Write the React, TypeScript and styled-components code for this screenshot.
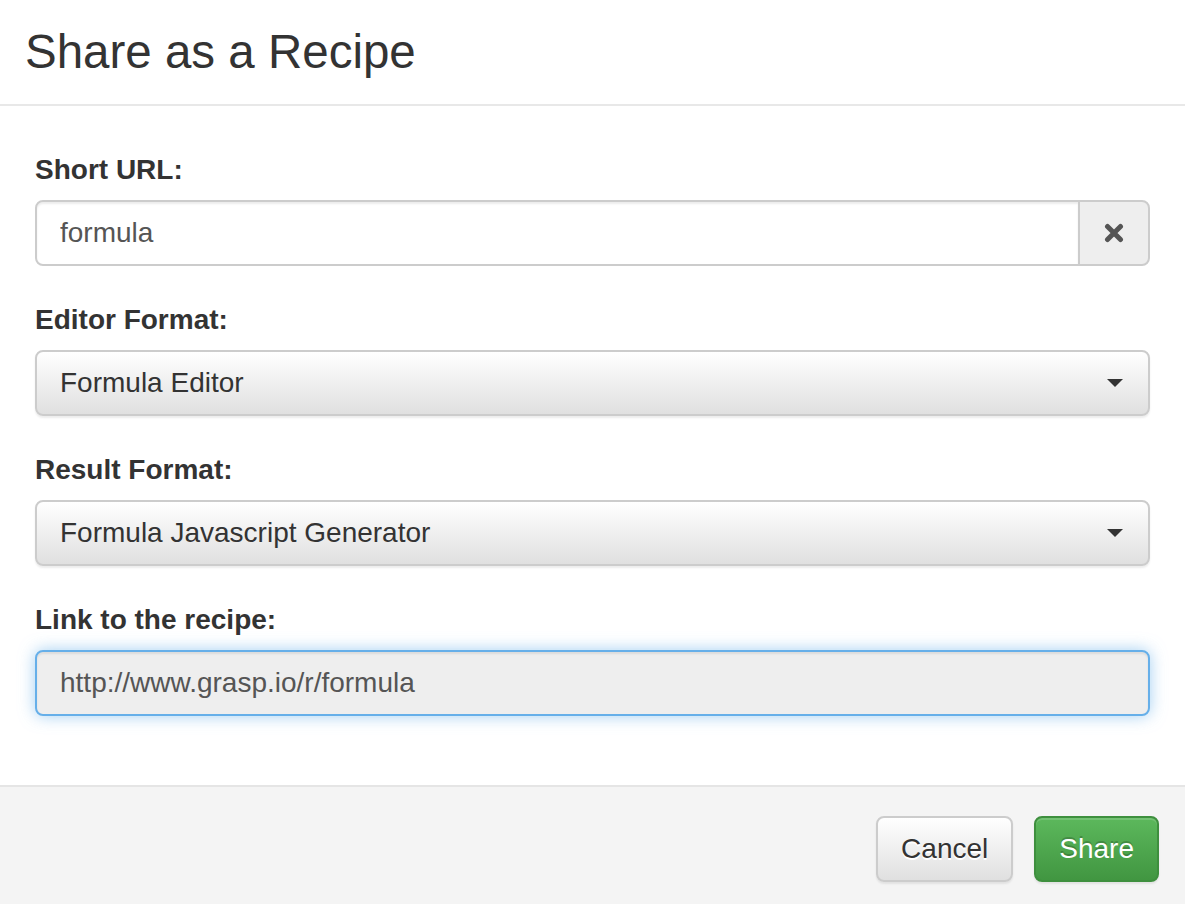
import React from 'react';
import styled, { createGlobalStyle } from 'styled-components';

const GlobalStyle = createGlobalStyle`
  html, body {
    margin: 0;
    padding: 0;
    background: #ffffff;
  }
  body {
    font-family: "Liberation Sans", Arial, Helvetica, sans-serif;
    color: #333333;
  }
  * {
    box-sizing: border-box;
  }
`;

// 모달 전체 (2x 레티나 비율 그대로)
const Modal = styled.div`
  width: 1185px;
  height: 904px;
  overflow: hidden;
  display: flex;
  flex-direction: column;
  background: #ffffff;
`;

const Header = styled.div`
  flex-shrink: 0;
  height: 106px;
  padding: 0 25px;
  display: flex;
  align-items: center;
  border-bottom: 2px solid #e8e8e8;
`;

const Title = styled.h4`
  margin: 0;
  font-size: 47.5px;
  font-weight: 400;
  line-height: 1;
  color: #333333;
`;

const Body = styled.div`
  flex-shrink: 0;
  padding: 44px 35px 35px;
`;

const FormGroup = styled.div`
  margin-bottom: 34px;
`;

const Label = styled.label`
  display: block;
  font-size: 28px;
  font-weight: 700;
  line-height: 40px;
  margin-bottom: 10px;
  color: #333333;
`;

const InputGroup = styled.div`
  display: flex;
  height: 66px;
`;

const TextInput = styled.input<{ $focused?: boolean; $readOnly?: boolean; $joined?: boolean }>`
  flex: 1;
  width: 100%;
  height: 66px;
  padding: 0 23px;
  font-family: inherit;
  font-size: 28px;
  color: #555555;
  background: ${p => (p.$readOnly ? '#eeeeee' : '#ffffff')};
  border: 2px solid ${p => (p.$focused ? '#66afe9' : '#cccccc')};
  border-radius: ${p => (p.$joined ? '8px 0 0 8px' : '8px')};
  box-shadow: ${p =>
    p.$focused
      ? 'inset 0 2px 2px rgba(0,0,0,0.075), 0 0 16px rgba(102,175,233,0.6)'
      : 'inset 0 2px 2px rgba(0,0,0,0.075)'};
  outline: none;
`;

const Addon = styled.span`
  width: 72px;
  display: flex;
  align-items: center;
  justify-content: center;
  background: #eeeeee;
  border: 2px solid #cccccc;
  margin-left: -2px;
  border-radius: 0 8px 8px 0;
  color: #555555;
`;

const SelectBox = styled.div`
  height: 66px;
  padding: 0 25px 0 23px;
  display: flex;
  align-items: center;
  justify-content: space-between;
  font-size: 28px;
  color: #333333;
  background: linear-gradient(to bottom, #ffffff 0%, #e0e0e0 100%);
  border: 2px solid #cccccc;
  border-radius: 8px;
  box-shadow: inset 0 2px 0 rgba(255,255,255,0.15), 0 2px 2px rgba(0,0,0,0.075);
`;

const Caret = styled.span`
  width: 0;
  height: 0;
  border-left: 8px solid transparent;
  border-right: 8px solid transparent;
  border-top: 8px solid #333333;
`;

const Footer = styled.div`
  flex-shrink: 0;
  border-top: 2px solid #e5e5e5;
  background: #f4f4f4;
  padding: 29px 26px;
  display: flex;
  justify-content: flex-end;
  align-items: flex-start;
  gap: 21px;
`;

const Button = styled.button<{ $primary?: boolean }>`
  height: 66px;
  padding: 0 23px;
  font-family: inherit;
  font-size: 28px;
  border-radius: 8px;
  border: 2px solid ${p => (p.$primary ? '#3e8f3e' : '#cccccc')};
  color: ${p => (p.$primary ? '#ffffff' : '#333333')};
  background: ${p =>
    p.$primary
      ? 'linear-gradient(to bottom, #5cb85c 0%, #419641 100%)'
      : 'linear-gradient(to bottom, #ffffff 0%, #e0e0e0 100%)'};
  text-shadow: ${p => (p.$primary ? '0 -2px 0 rgba(0,0,0,0.2)' : '0 2px 0 #fff')};
  box-shadow: inset 0 2px 0 rgba(255,255,255,0.15), 0 2px 2px rgba(0,0,0,0.075);
  cursor: pointer;
`;

const RemoveIcon = () => (
  <svg width="20" height="20" viewBox="0 0 20 20">
    <path
      d="M3.5 3.5 L16.5 16.5 M16.5 3.5 L3.5 16.5"
      stroke="#555555"
      strokeWidth="5"
      strokeLinecap="round"
    />
  </svg>
);

export default function App() {
  return (
    <>
      <GlobalStyle />
      <Modal>
        <Header>
          <Title>Share as a Recipe</Title>
        </Header>
        <Body>
          <FormGroup>
            <Label>Short URL:</Label>
            <InputGroup>
              <TextInput $joined defaultValue="formula" />
              <Addon>
                <RemoveIcon />
              </Addon>
            </InputGroup>
          </FormGroup>
          <FormGroup>
            <Label>Editor Format:</Label>
            <SelectBox>
              <span>Formula Editor</span>
              <Caret />
            </SelectBox>
          </FormGroup>
          <FormGroup>
            <Label>Result Format:</Label>
            <SelectBox>
              <span>Formula Javascript Generator</span>
              <Caret />
            </SelectBox>
          </FormGroup>
          <FormGroup>
            <Label>Link to the recipe:</Label>
            <TextInput $focused $readOnly readOnly defaultValue="http://www.grasp.io/r/formula" />
          </FormGroup>
        </Body>
        <Footer>
          <Button>Cancel</Button>
          <Button $primary>Share</Button>
        </Footer>
      </Modal>
    </>
  );
}
